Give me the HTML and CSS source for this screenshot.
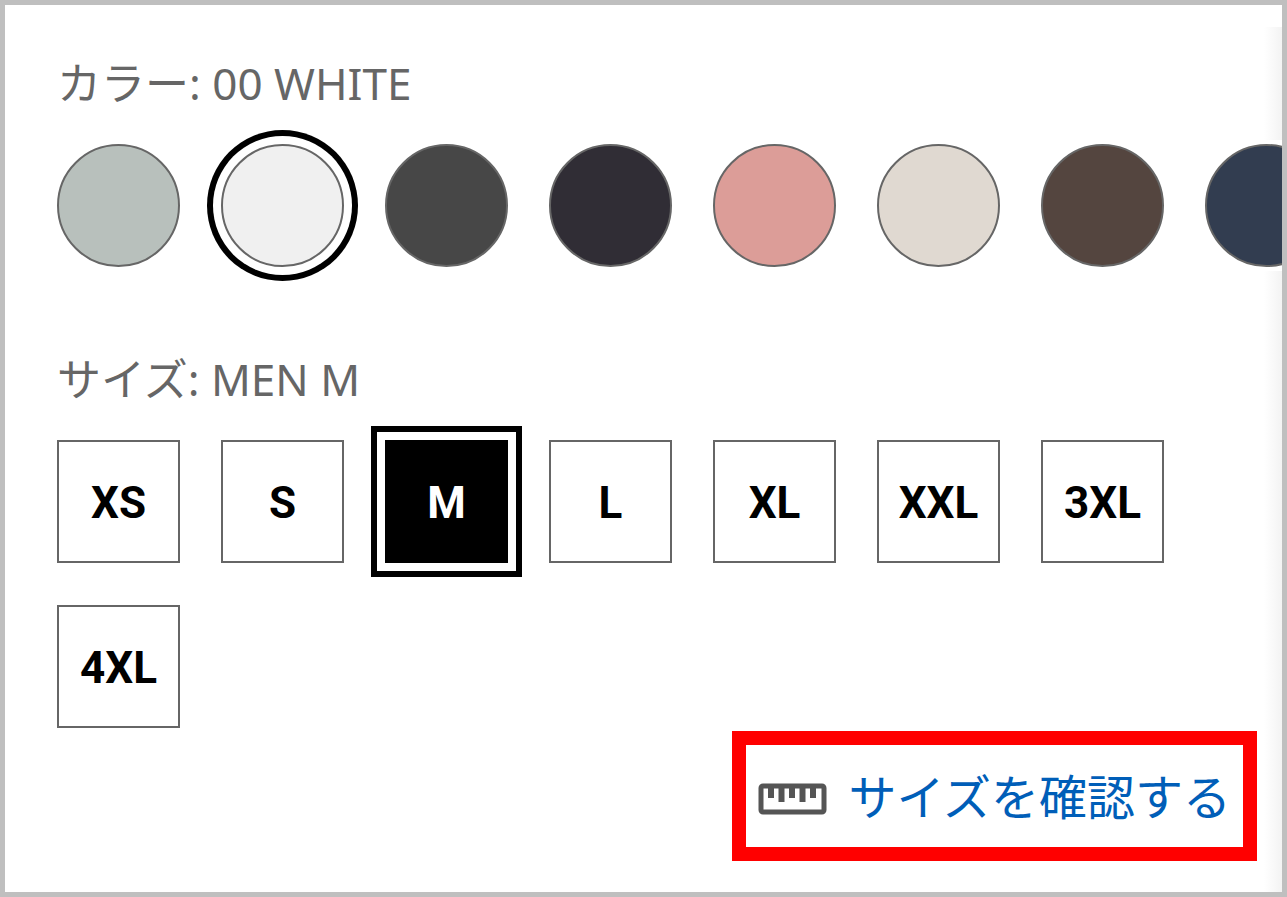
FILE: index.html
```
<!DOCTYPE html>
<html lang="ja">
<head>
    <meta charset="UTF-8">
    <meta name="viewport" content="width=device-width, initial-scale=1.0">
    <title>カラー・サイズ選択</title>
    <link rel="stylesheet" href="styles.css">
</head>
<body>

    <main class="panel">
        <section class="option">
            <h2 class="option-title" id="colorTitle">カラー: 00 WHITE</h2>
            <div class="colors" role="group" aria-labelledby="colorTitle">
                <button type="button" class="chip gray" aria-label="GRAY" aria-pressed="false"></button>
                <button type="button" class="chip white selected" aria-label="WHITE" aria-pressed="true"></button>
                <button type="button" class="chip dark-gray" aria-label="DARK GRAY" aria-pressed="false"></button>
                <button type="button" class="chip black" aria-label="BLACK" aria-pressed="false"></button>
                <button type="button" class="chip pink" aria-label="PINK" aria-pressed="false"></button>
                <button type="button" class="chip natural" aria-label="NATURAL" aria-pressed="false"></button>
                <button type="button" class="chip brown" aria-label="BROWN" aria-pressed="false"></button>
                <button type="button" class="chip navy" aria-label="NAVY" aria-pressed="false"></button>
            </div>
        </section>

        <section class="option">
            <h2 class="option-title" id="sizeTitle">サイズ: MEN M</h2>
            <div class="sizes" role="group" aria-labelledby="sizeTitle">
                <button type="button" class="size" aria-pressed="false">XS</button>
                <button type="button" class="size" aria-pressed="false">S</button>
                <button type="button" class="size selected" aria-pressed="true">M</button>
                <button type="button" class="size" aria-pressed="false">L</button>
                <button type="button" class="size" aria-pressed="false">XL</button>
                <button type="button" class="size" aria-pressed="false">XXL</button>
                <button type="button" class="size" aria-pressed="false">3XL</button>
                <button type="button" class="size" aria-pressed="false">4XL</button>
            </div>
        </section>

        <div class="guide">
            <a href="#" class="guide-link">
                <svg class="ruler" viewBox="0 0 70 32" width="70" height="32" aria-hidden="true">
                    <rect x="3" y="3" width="63" height="26" rx="2" fill="none" stroke="#555" stroke-width="5"/>
                    <path d="M13 4v11M23.500 4v15M34 4v11M44.500 4v15M55 4v11" fill="none" stroke="#555" stroke-width="6"/>
                </svg>
                <span>サイズを確認する</span>
            </a>
        </div>
    </main>

</body>
</html>
```
FILE: styles.css
```
* {
    box-sizing: border-box;
}
body {
    margin: 0;
    font-family: "Noto Sans", "Noto Sans CJK JP", sans-serif;
    background-color: #fff;
}
.panel {
    position: relative;
    min-height: 100vh;
    padding: 48px 25px 31px 52px;
    border: 5px solid #bfbfbf;
    overflow: hidden;
}
/* soft shade along the right edge */
.panel::after {
    content: "";
    position: absolute;
    top: 22px;
    right: 0;
    bottom: 0;
    width: 18px;
    background: linear-gradient(to right, #fff, #f3f3f3);
}
.option-title {
    margin: 0;
    font-size: 44px;
    font-weight: 400;
    line-height: 60px;
    color: #666;
}
.colors {
    position: relative;
    z-index: 1;
    display: flex;
    gap: 41px;
    margin: 27px -25px 78px 0;
    padding: 4px 0;
    background-color: #fff;
}
.chip {
    flex: none;
    width: 123px;
    height: 123px;
    padding: 0;
    border: 2px solid #666;
    border-radius: 50%;
    cursor: pointer;
}
.gray { background-color: #b8c0bc; }
.white { background-color: #f0f0f0; }
.dark-gray { background-color: #474747; }
.black { background-color: #302d35; }
.pink { background-color: #dc9d98; }
.natural { background-color: #e0d9d1; }
.brown { background-color: #54453f; }
.navy { background-color: #323d50; }
.sizes {
    display: flex;
    flex-wrap: wrap;
    gap: 42px 41px;
    margin-top: 31px;
}
.size {
    width: 123px;
    height: 123px;
    padding: 2px 0 0;
    border: 2px solid #666;
    font-family: "Roboto", sans-serif;
    font-size: 44px;
    font-weight: 700;
    line-height: 60px;
    color: #000;
    background-color: #fff;
    cursor: pointer;
}
.size.selected {
    border-color: #000;
    color: #fff;
    background-color: #000;
}
.selected {
    box-shadow: 0 0 0 8px #fff, 0 0 0 14px #000;
}
.guide {
    display: flex;
    justify-content: flex-end;
    margin-top: 3px;
}
.guide-link {
    display: flex;
    align-items: baseline;
    gap: 20px;
    padding: 17px 12px 15px;
    border: 14px solid #f00;
    font-size: 48px;
    line-height: 70px;
    color: #005eb8;
    text-decoration: none;
}
.ruler {
    flex: none;
}
```
